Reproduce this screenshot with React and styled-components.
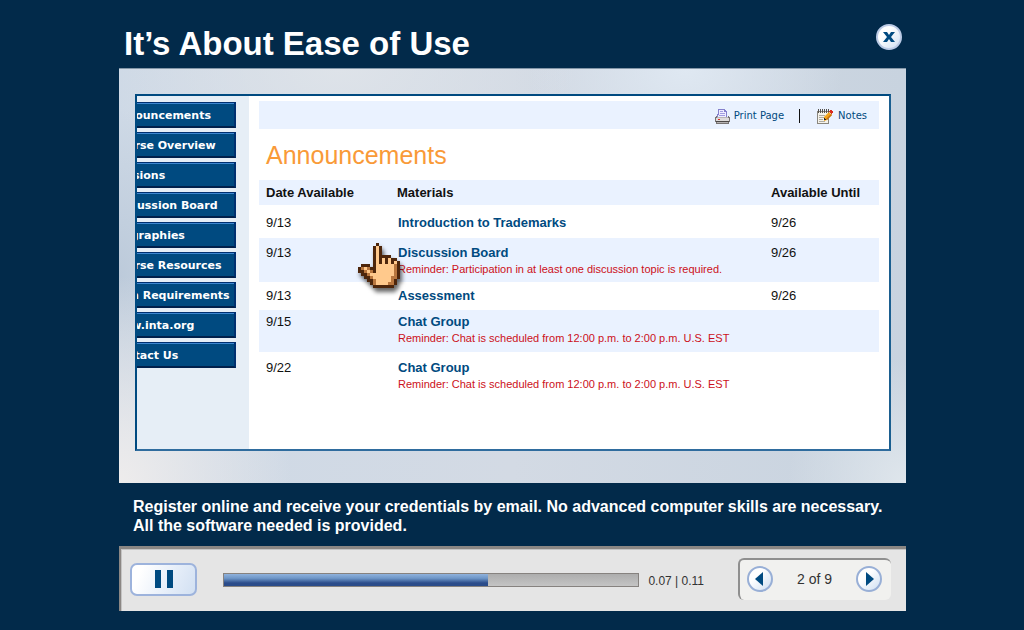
import styled, { createGlobalStyle } from "styled-components"

const GlobalStyle = createGlobalStyle`
    * {
        box-sizing: border-box;
    }
    body {
        margin: 0;
        background-color: #022a4a;
        font-family: "Liberation Sans", Arial, sans-serif;
    }
`
const Page = styled.div`
    padding: 0 118px 19px 119px;
`
const Header = styled.header`
    height: 68px;
    padding: 5px 4px 0 5px;
    display: flex;
    justify-content: space-between;
    align-items: center;
`
const Title = styled.h1`
    margin: 14px 0 0;
    font-size: 33px;
    line-height: 38px;
    color: #fff;
`
const RoundButton = styled.button`
    width: 26px;
    height: 26px;
    padding: 0;
    display: flex;
    justify-content: center;
    align-items: center;
    border: 2px solid ${(props) => (props.$light ? "#bccbe6" : "#98afd6")};
    border-radius: 50%;
    background: linear-gradient(135deg, #fff 35%, #cfdff2);
    color: #004a80;
    cursor: pointer;
`
const Stage = styled.main`
    padding: 25px 15px 32px 16px;
    border-top: 1px solid #8396a8;
    background:
        radial-gradient(ellipse 22% 50% at 0% 100%, #eeecec, transparent),
        radial-gradient(ellipse 20% 30% at 72% 0%, #dfe8f2, transparent),
        radial-gradient(ellipse 30% 30% at 28% 0%, #dee3e9, transparent),
        radial-gradient(ellipse 15% 30% at 100% 100%, #dfe6ec, transparent),
        radial-gradient(ellipse 10% 40% at 0% 50%, #bccada, transparent),
        linear-gradient(90deg, #ced9e6, #d3dae4 50%, #c8d3df);
`
const Screen = styled.div`
    display: flex;
    border: 2px solid #004a80;
    border-right-color: #1b5f90;
    border-bottom-color: #2f6c9e;
    background-color: #fff;
`
const Sidebar = styled.nav`
    width: 112px;
    flex: none;
    padding: 6px 13px 0 0;
    overflow: hidden;
    background-color: #e6eef6;
`
const NavList = styled.ul`
    margin: 0 0 0 -35px;
    padding: 0;
    display: flex;
    flex-direction: column;
    gap: 4px;
    list-style: none;
`
const NavLink = styled.a`
    display: block;
    height: 26px;
    padding-left: 8px;
    border: 1px solid #003070;
    border-right-width: 2px;
    border-bottom: 2px solid #00204c;
    box-shadow: inset 0 1px #3c86d0;
    background-color: #004a80;
    font-family: "DejaVu Sans", Verdana, sans-serif;
    font-size: 11px;
    font-weight: bold;
    line-height: 25px;
    white-space: nowrap;
    text-decoration: none;
    color: #fff;
`
const Content = styled.section`
    flex: 1;
    min-width: 0;
    padding: 5px 10px 53px;
`
const Toolbar = styled.div`
    height: 28px;
    padding: 2px 12px 0 0;
    display: flex;
    justify-content: flex-end;
    align-items: center;
    gap: 15px;
    background-color: #eaf2ff;
`
const ToolLink = styled.a`
    display: flex;
    align-items: center;
    gap: 4px;
    font-family: "DejaVu Sans", Verdana, sans-serif;
    font-size: 10px;
    line-height: 16px;
    text-decoration: none;
    color: #004a80;
`
const Separator = styled.span`
    width: 1px;
    height: 14px;
    margin-right: 2px;
    background-color: #111;
`
const SectionTitle = styled.h2`
    margin: 0;
    padding: 1px 7px 0;
    font-size: 25px;
    font-weight: normal;
    line-height: 50px;
    color: #f99a38;
`
const Table = styled.table`
    width: 100%;
    table-layout: fixed;
    border-collapse: collapse;
    font-size: 13px;
    line-height: 16px;
    color: #111;

    th, td {
        padding: 0;
        text-align: left;
        vertical-align: top;
    }
    th:first-child, td:first-child {
        width: 138px;
        padding-left: 7px;
    }
    th:last-child {
        width: 108px;
    }
`
const Row = styled.tr`
    height: ${(props) => props.$height}px;
    background-color: ${(props) => (props.$shaded ? "#eaf2ff" : "#fff")};

    th, td {
        padding-top: ${(props) => props.$top}px;
    }
`
const MaterialCell = styled.td`
    position: relative;
`
const Material = styled.a`
    display: block;
    padding-left: 1px;
    font-weight: bold;
    text-decoration: none;
    color: #004a80;
`
const Reminder = styled.p`
    margin: 0;
    padding-left: 1px;
    font-size: 11px;
    line-height: 17px;
    white-space: nowrap;
    color: #cc1020;
`
const Hand = styled.svg`
    position: absolute;
    left: -39px;
    top: 5px;
    z-index: 1;
    filter: drop-shadow(2px 4px 2px rgba(0, 0, 0, 0.6));
`
const Caption = styled.p`
    margin: 0;
    padding: 14px 14px 11px;
    font-size: 16px;
    font-weight: bold;
    line-height: 19px;
    color: #fff;
`
const Controls = styled.footer`
    padding: 9px 15px 11px 9px;
    display: flex;
    align-items: center;
    border-top: 3px solid #8b8784;
    border-left: 2px solid #8b8784;
    box-shadow: inset 1px 1px #c4c4c4;
    background-color: #e5e5e5;
`
const PauseButton = styled.button`
    width: 67px;
    height: 33px;
    padding: 0;
    display: flex;
    justify-content: center;
    align-items: center;
    border: 2px solid #9db3dc;
    border-radius: 7px;
    background: linear-gradient(115deg, #fff 15%, #e6eef9 60%, #d2e0f2);
    color: #004a80;
    cursor: pointer;
`
const Track = styled.div`
    flex: 1;
    height: 14px;
    margin: 2px 9px 0 26px;
    border: 1px solid #86827f;
    background: linear-gradient(#adadad, #c4c4c4);
`
const Fill = styled.div`
    height: 100%;
    background: linear-gradient(#8fb2dc, #6f97c8 35%, #2b4c8a 75%, #2b4c8a);
`
const Time = styled.span`
    margin: 4px 34px 0 0;
    font-size: 12px;
    line-height: 16px;
    color: #333;
`
const Pager = styled.div`
    width: 153px;
    height: 42px;
    padding: 0 9px 2px 7px;
    display: flex;
    justify-content: space-between;
    align-items: center;
    border-top: 2px solid #8f8f8f;
    border-left: 2px solid #8f8f8f;
    border-radius: 6px;
    background-color: #f1f1ef;
    font-size: 14px;
    color: #333;
`

const links = [
  "Announcements",
  "Course Overview",
  "Sessions",
  "Discussion Board",
  "Biographies",
  "Course Resources",
  "Tech Requirements",
  "www.inta.org",
  "Contact Us",
]

const chatReminder = "Reminder: Chat is scheduled from 12:00 p.m. to 2:00 p.m. U.S. EST"

const materials = [
  { date: "9/13", name: "Introduction to Trademarks", until: "9/26", height: 33, top: 10 },
  {
    date: "9/13",
    name: "Discussion Board",
    note: "Reminder: Participation in at least one discussion topic is required.",
    until: "9/26",
    height: 44,
    top: 7,
    shaded: true,
    hand: true,
  },
  { date: "9/13", name: "Assessment", until: "9/26", height: 28, top: 6 },
  { date: "9/15", name: "Chat Group", note: chatReminder, height: 42, top: 4, shaded: true },
  { date: "9/22", name: "Chat Group", note: chatReminder, height: 44, top: 8 },
]

const handPixels = [
  "......D.......",
  ".....DLD......",
  ".....DLD......",
  ".....DLD......",
  ".....DLDDDD...",
  ".....DLDLDLDD.",
  ".....DLDLDLDLD",
  ".DDD.DLLLLLLMD",
  "DMLMDDLLLLLLMD",
  "DDMLMDLLLLLLMD",
  ".DDMLLLLLLLLMD",
  "..DDMLLLLLLMMD",
  "...DDMLLLLLMD.",
  "....DMLLLLMMD.",
  ".....DDDDDDD..",
]
const handColors = { D: "#4d260c", M: "#b9773f", L: "#ffc98c" }

const PixelHand = () => (
  <Hand width="42" height="45" viewBox="0 0 14 15" shapeRendering="crispEdges" aria-hidden="true">
    {handPixels.map((line, y) =>
      line.split("").map((p, x) =>
        p === "." ? null : <rect key={`${x}-${y}`} x={x} y={y} width="1" height="1" fill={handColors[p]} />
      )
    )}
  </Hand>
)

const PrinterIcon = () => (
  <svg width="15" height="15" viewBox="0 0 15 15" shapeRendering="crispEdges" aria-hidden="true">
    <path d="M3 0h7v1h1v1h1v7H2V5h1z" fill="#8480cc" />
    <path d="M4 1h5v2h2v5H3V6h1z" fill="#eeedff" />
    <path d="M5 2h3v1H5zM5 4h5v1H5zM4 6h6v1H4z" fill="#a19de0" />
    <path d="M1 7h1v1h11V7h1v1h1v5h-1v2H1v-2H0V8h1z" fill="#777373" />
    <path d="M2 8h11v1H2z" fill="#b9b6b6" />
    <path d="M1 9h13v3H1z" fill="#dddbdb" />
    <path d="M3 10h2v1H3z" fill="#e02a2a" />
    <path d="M1 12h13v1H1z" fill="#4b4747" />
    <path d="M2 13h11v1H2z" fill="#b4b1b1" />
  </svg>
)

const NotesIcon = () => (
  <svg width="17" height="15" viewBox="0 0 17 15" shapeRendering="crispEdges" aria-hidden="true">
    <path d="M0 2h12v13H0z" fill="#8a877f" />
    <path d="M1 3h10v11H1z" fill="#f4f2ea" />
    <path d="M1 0h1v4H1zM3 0h1v4H3zM5 0h1v4H5zM7 0h1v4H7zM9 0h1v4H9zM11 0h1v4h-1z" fill="#55524e" />
    <path d="M2 6h6v1H2zM2 8h5v1H2zM2 10h4v1H2zM2 12h6v1H2z" fill="#aeaba2" />
    <path d="M7 8l5-5 3 3-5 5-3 1z" fill="#f4a51c" shapeRendering="auto" />
    <path d="M9 10l5-5 1 1-5 5z" fill="#c26e12" shapeRendering="auto" />
    <path d="M7 9h1v1h1v1H7z" fill="#2b2522" />
    <path d="M13 1h2v1h1v2h-1v1h-1V4h-1V3h-1V2h1z" fill="#d92b20" />
  </svg>
)

const App = () => {
  return (
    <>
      <GlobalStyle />
      <Page>
        <Header>
          <Title>It’s About Ease of Use</Title>
          <RoundButton $light aria-label="Close">
            <svg width="12" height="10" viewBox="0 0 12 10" aria-hidden="true">
              <path d="M0 0h4l2 3 2-3h4L8 5l4 5H8L6 7l-2 3H0l4-5z" fill="currentColor" />
            </svg>
          </RoundButton>
        </Header>
        <Stage>
          <Screen>
            <Sidebar>
              <NavList>
                {links.map((label) => (
                  <li key={label}>
                    <NavLink href="#">{label}</NavLink>
                  </li>
                ))}
              </NavList>
            </Sidebar>
            <Content>
              <Toolbar>
                <ToolLink href="#">
                  <PrinterIcon />
                  Print Page
                </ToolLink>
                <Separator />
                <ToolLink href="#">
                  <NotesIcon />
                  Notes
                </ToolLink>
              </Toolbar>
              <SectionTitle>Announcements</SectionTitle>
              <Table>
                <thead>
                  <Row $height={25} $top={5} $shaded>
                    <th>Date Available</th>
                    <th>Materials</th>
                    <th>Available Until</th>
                  </Row>
                </thead>
                <tbody>
                  {materials.map((item, i) => (
                    <Row key={i} $height={item.height} $top={item.top} $shaded={item.shaded}>
                      <td>{item.date}</td>
                      <MaterialCell>
                        <Material href="#">{item.name}</Material>
                        {item.note && <Reminder>{item.note}</Reminder>}
                        {item.hand && <PixelHand />}
                      </MaterialCell>
                      <td>{item.until}</td>
                    </Row>
                  ))}
                </tbody>
              </Table>
            </Content>
          </Screen>
        </Stage>
        <Caption>
          Register online and receive your credentials by email. No advanced computer skills are necessary.
          All the software needed is provided.
        </Caption>
        <Controls>
          <PauseButton aria-label="Pause">
            <svg width="18" height="18" viewBox="0 0 18 18" aria-hidden="true">
              <path d="M0 0h6v18H0zM12 0h6v18h-6z" fill="currentColor" />
            </svg>
          </PauseButton>
          <Track role="progressbar" aria-label="Playback" aria-valuemin={0} aria-valuemax={11} aria-valuenow={7}>
            <Fill style={{ width: `${(7 / 11) * 100}%` }} />
          </Track>
          <Time>0.07 | 0.11</Time>
          <Pager>
            <RoundButton aria-label="Previous">
              <svg width="12" height="14" viewBox="0 0 12 14" aria-hidden="true">
                <path d="M9 0v14L1 7z" fill="currentColor" />
              </svg>
            </RoundButton>
            <span>2 of 9</span>
            <RoundButton aria-label="Next">
              <svg width="12" height="14" viewBox="0 0 12 14" aria-hidden="true">
                <path d="M3 0v14l8-7z" fill="currentColor" />
              </svg>
            </RoundButton>
          </Pager>
        </Controls>
      </Page>
    </>
  )
}

export default App
